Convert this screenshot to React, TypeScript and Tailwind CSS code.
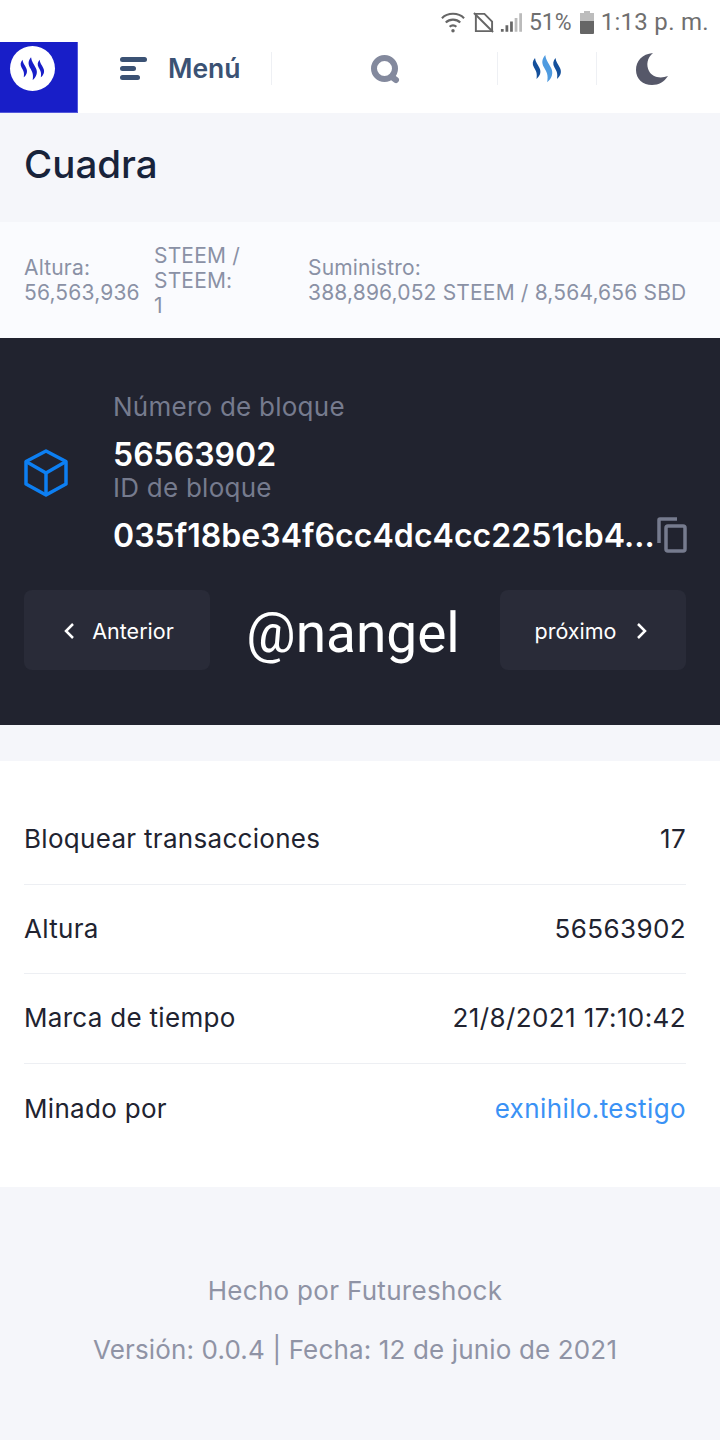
import React from "react";

const Steem = ({ a, b, c, w = 30, h = 28 }: { a: string; b: string; c: string; w?: number; h?: number }) => (
  <svg width={w} height={h} viewBox="0 0 30 28">
    {[
      { t: "translate(0.500 3)", f: a },
      { t: "translate(10 0) scale(1.3)", f: b },
      { t: "translate(21 3)", f: c },
    ].map((s, i) => (
      <path
        key={i}
        transform={s.t}
        fill={s.f}
        d="M2.500 0 C0 3 -0.500 6 1.500 9.500 C3.500 13 5 15 4 21 C7.500 18 9 14 7 10 C5 6 3 4 2.500 0 Z"
      />
    ))}
  </svg>
);

const Row = ({ label, value, link, last }: { label: string; value: string; link?: boolean; last?: boolean }) => (
  <div className={`flex h-[89.600px] items-center justify-between pb-[1px] ${last ? "" : "border-b border-[#edeff3]"}`}>
    <span className="text-[26px] tracking-[0.3px] text-[#212330]">{label}</span>
    <span className={`text-[26px] tracking-[0.4px] ${link ? "text-[#3a92f5]" : "text-[#212330]"}`}>{value}</span>
  </div>
);

export default function App() {
  return (
    <div className="flex h-[1440px] w-[720px] flex-col overflow-hidden bg-[#f5f6fa] font-['Inter',sans-serif]">
      <div className="flex h-[42px] items-center justify-end bg-white pr-[11px] pt-[2px] font-['Roboto',sans-serif] text-[#6f6f6f]">
        <svg width="26" height="24" viewBox="0 0 27 24" fill="none" stroke="#666" strokeWidth="2.200" className="mr-[7px]">
          <path d="M2 8 C8 2 19 2 25 8" />
          <path d="M6 12.500 C10 8.500 17 8.500 21 12.500" />
          <path d="M10 17 C12 15 15 15 17 17" />
          <circle cx="13.500" cy="21" r="1.800" fill="#666" stroke="none" />
        </svg>
        <svg width="21" height="21" viewBox="0 0 22 22" fill="none" stroke="#666" strokeWidth="2" className="mr-[6px]">
          <path d="M3 2 H12 L20 10 V20 H3 Z" />
          <path d="M1 1 L21 21" />
        </svg>
        <svg width="22" height="21" viewBox="0 0 24 22" className="mr-[7px]">
          <path d="M1 21 V18 H4 V21 Z M6 21 V14 H9 V21 Z M11 21 V10 H14 V21 Z" fill="#666" />
          <path d="M16 21 V6 H19 V21 Z M21 21 V1 H24 V21 Z" fill="#bbb" />
        </svg>
        <span className="text-[23px] leading-none">51%</span>
        <svg width="14" height="23" viewBox="0 0 14 23" className="ml-[8px] mr-[7px]">
          <path d="M4 0 H10 V2 H14 V10 H0 V2 H4 Z" fill="#bdbdbd" />
          <path d="M0 10 H14 V22 Q14 23 13 23 H1 Q0 23 0 22 Z" fill="#666" />
        </svg>
        <span className="text-[24px] leading-none tracking-[0.3px]">1:13 p. m.</span>
      </div>

      <header className="flex h-[71px] items-start bg-white">
        <div className="h-[71px] w-[78px] shrink-0 border-b border-r border-[#5358dc] bg-[#181ec8] pl-[10px] pt-[4px]">
          <div className="flex h-[45px] w-[45px] items-center justify-center rounded-full bg-white">
            <Steem a="#181ec8" b="#181ec8" c="#181ec8" w={25} h={24} />
          </div>
        </div>
        <div className="mt-[10px] flex h-[33px] w-[194px] items-center border-r border-[#eef0f4] pl-[42px]">
          <svg width="27" height="24" viewBox="0 0 27 24" fill="#3b5274">
            <rect x="0" y="0" width="27" height="5" rx="2.500" />
            <rect x="0" y="9" width="16" height="5" rx="2.500" />
            <rect x="0" y="18" width="20" height="5" rx="2.500" />
          </svg>
          <span className="ml-[21px] text-[26.500px] font-semibold text-[#3b5274]">Menú</span>
        </div>
        <div className="mt-[10px] flex h-[33px] w-[226px] items-center justify-center border-r border-[#eef0f4]">
          <svg width="30" height="30" viewBox="0 0 30 30" fill="none" stroke="#83899d" strokeWidth="6" strokeLinecap="round">
            <circle cx="14.500" cy="14.500" r="10.500" />
            <path d="M22 23 L26 26" />
          </svg>
        </div>
        <div className="mt-[10px] flex h-[33px] w-[99px] items-center justify-center border-r border-[#eef0f4]">
          <Steem a="#14509b" b="#4f9be0" c="#14509b" />
        </div>
        <div className="mt-[10px] flex h-[33px] flex-1 items-center justify-center pr-[14px]">
          <svg width="34" height="34" viewBox="0 0 34 34">
            <path fill="#565869" d="M18 1 C7 2 1 9 1 18 C1 27 8 33 17 33 C24 33 29 30 33 24 C25 27 17 25 14 19 C11 13 12 6 18 1 Z" />
          </svg>
        </div>
      </header>

      <div className="flex h-[109px] items-center px-[24px] pb-[6px]">
        <h1 className="text-[38.500px] font-[550] text-[#18233a]">Cuadra</h1>
      </div>

      <div className="flex h-[116px] items-center bg-[#fafbfe] px-[24px] text-[21px] leading-[25px] tracking-[0.17px] text-[#8a91a5]">
        <div className="w-[130px]">Altura:<br />56,563,936</div>
        <div className="w-[154px]">STEEM /<br />STEEM:<br />1</div>
        <div>Suministro:<br /><span className="whitespace-nowrap">388,896,052 STEEM / 8,564,656 SBD</span></div>
      </div>

      <section className="h-[387px] bg-[#21232f] pl-[24px] pr-[34px] pt-[50px]">
        <div className="flex items-center">
          <svg width="44" height="48" viewBox="0 0 44 48" fill="none" stroke="#0d7ff2" strokeWidth="3.500" strokeLinejoin="round" className="mr-[45px] mt-[2px] shrink-0">
            <path d="M22 2 L42 12.500 V35 L22 46 L2 35 V12.500 Z" />
            <path d="M2 12.500 L22 24 L42 12.500 M22 24 V46" />
          </svg>
          <div className="min-w-0 flex-1">
            <div className="text-[26px] leading-[38px] tracking-[0.25px] text-[#767b8e]">Número de bloque</div>
            <div className="mt-[10px] text-[32px] font-semibold leading-[38px] text-white">56563902</div>
            <div className="-mt-[1px] text-[26px] leading-[30px] tracking-[0.25px] text-[#767b8e]">ID de bloque</div>
            <div className="mt-[14px] flex items-center justify-between">
              <span className="whitespace-nowrap text-[32px] font-semibold leading-[38px] tracking-[0.05px] text-white">035f18be34f6cc4dc4cc2251cb4...</span>
              <svg width="30" height="36" viewBox="0 0 30 36" fill="none" stroke="#767b8e" strokeWidth="3.500" className="-mr-[1px] -mt-[2px] shrink-0">
                <path d="M2 26 V3 Q2 2 3 2 H20" />
                <rect x="9" y="9" width="19" height="25" rx="2" />
              </svg>
            </div>
          </div>
        </div>
        <div className="mt-[35px] flex items-center justify-between">
          <div className="flex h-[80px] w-[186px] items-center justify-center rounded-[8px] bg-[#292b38] pl-[3px] pt-[2px] text-[21.500px] text-white">
            <svg width="12" height="18" viewBox="0 0 12 18" fill="none" stroke="#fff" strokeWidth="2.500" className="mr-[17px]">
              <path d="M10 2 L3 9 L10 16" />
            </svg>
            Anterior
          </div>
          <span className="-ml-[4px] pt-[7px] font-['Roboto',sans-serif] text-[55px] leading-none text-white">@nangel</span>
          <div className="flex h-[80px] w-[186px] items-center justify-center rounded-[8px] bg-[#292b38] pr-[3px] pt-[2px] text-[21.500px] text-white">
            próximo
            <svg width="12" height="18" viewBox="0 0 12 18" fill="none" stroke="#fff" strokeWidth="2.500" className="ml-[20px]">
              <path d="M2 2 L9 9 L2 16" />
            </svg>
          </div>
        </div>
      </section>

      <section className="mt-[36px] h-[426px] bg-white pl-[24px] pr-[34px] pt-[34px]">
        <Row label="Bloquear transacciones" value="17" />
        <Row label="Altura" value="56563902" />
        <Row label="Marca de tiempo" value="21/8/2021 17:10:42" />
        <Row label="Minado por" value="exnihilo.testigo" link last />
      </section>

      <footer className="pr-[10px] pt-[82px] text-center text-[26px] text-[#8f93a5]">
        <div className="leading-[44px] tracking-[0.3px]">Hecho por Futureshock</div>
        <div className="mt-[15px] leading-[44px] tracking-[0.15px]">Versión: 0.0.4 | Fecha: 12 de junio de 2021</div>
      </footer>
    </div>
  );
}
